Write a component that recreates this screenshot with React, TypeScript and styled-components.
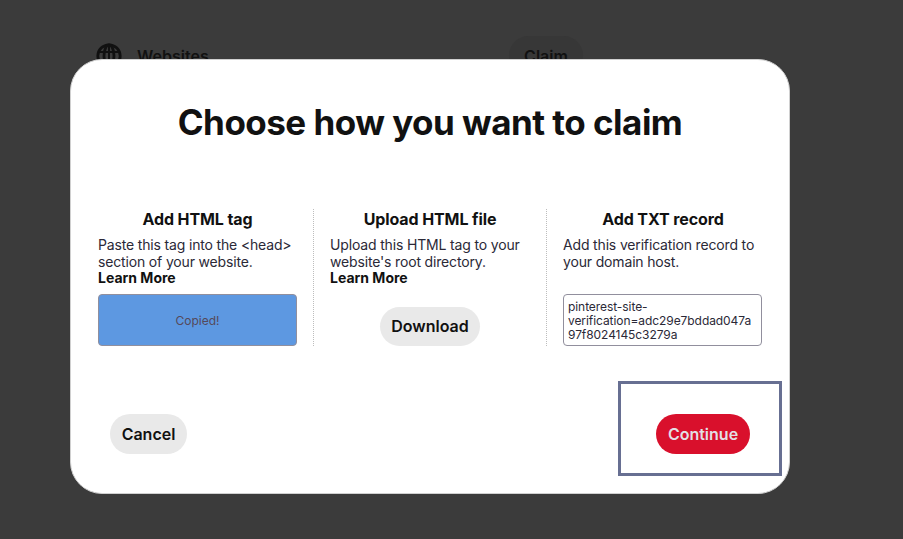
import React from 'react';
import styled, { createGlobalStyle } from 'styled-components';

const GlobalStyle = createGlobalStyle`
  *, *::before, *::after { box-sizing: border-box; }
  body {
    margin: 0;
    background: #3b3b3b;
    color: #111;
    font-family: Inter, "Liberation Sans", sans-serif;
    overflow: hidden;
  }
  h1, h2, p { margin: 0; }
  button { font-family: inherit; border: 0; }
`;

const Page = styled.main`
  position: relative;
  height: 539px;
  padding: 36px 0 0 96px;
  overflow: hidden;
`;

const SettingsRow = styled.div`
  display: flex;
  align-items: center;
  width: 487px;
  height: 39px;
  font-size: 16px;
  font-weight: 600;
`;

const SettingsLabel = styled.span`
  margin-left: 15px;
  flex: 1;
`;

const ClaimButton = styled.button`
  width: 74px;
  height: 39px;
  padding: 0;
  border-radius: 20px;
  background: #373737;
  color: #111;
  font-size: 16px;
  font-weight: 600;
`;

const Dialog = styled.section`
  position: absolute;
  top: 59px;
  left: 70px;
  display: flex;
  flex-direction: column;
  width: 720px;
  height: 435px;
  padding: 39px 7px 0 11px;
  border: 1px solid #d0d0d0;
  border-radius: 32px;
  background: #fff;
`;

const Title = styled.h1`
  height: 44px;
  padding-right: 4px;
  text-align: center;
  font-size: 35px;
  line-height: 46px;
  font-weight: 700;
  letter-spacing: -0.52px;
  white-space: nowrap;
`;

const Methods = styled.div`
  display: grid;
  grid-template-columns: 231px 233px 233px;
  height: 135px;
  margin-top: 66px;
`;

const Method = styled.article`
  display: flex;
  flex-direction: column;
  padding: 0 16px;
  & + & { border-left: 1px dotted #bdbdbd; }
`;

const MethodTitle = styled.h2`
  height: 20px;
  text-align: center;
  font-size: 16px;
  line-height: 20px;
  font-weight: 700;
  letter-spacing: -0.1px;
`;

const Description = styled.p`
  height: 50px;
  margin-top: 8px;
  color: #2b2937;
  font-size: 14px;
  line-height: 16.5px;
  letter-spacing: -0.16px;
  white-space: nowrap;
`;

const LearnMore = styled.strong`
  color: #111;
  font-weight: 700;
  letter-spacing: 0;
`;

const CodeBox = styled.div<{ $copied?: boolean }>`
  display: flex;
  align-items: center;
  justify-content: ${p => (p.$copied ? 'center' : 'flex-start')};
  width: 199px;
  height: 52px;
  margin-top: 7px;
  padding: 2px 4px 0;
  border: 1px solid #918f9d;
  border-radius: 4px;
  background: ${p => (p.$copied ? '#5d98e1' : '#fff')};
  color: ${p => (p.$copied ? '#55495a' : '#2b2937')};
  font-size: 12px;
  line-height: 14px;
  letter-spacing: ${p => (p.$copied ? '0' : '-0.07px')};
  white-space: nowrap;
`;

const Pill = styled.button<{ $width: number; $height?: number; $primary?: boolean }>`
  flex: none;
  width: ${p => p.$width}px;
  height: ${p => p.$height ?? 40}px;
  padding: 0;
  border-radius: 20px;
  background: ${p => (p.$primary ? '#d9102c' : '#e9e9e9')};
  color: ${p => (p.$primary ? '#e3dfe4' : '#111')};
  font-size: 16px;
  font-weight: 600;
`;

const DownloadArea = styled.div`
  display: flex;
  justify-content: center;
  margin-top: 20px;
  ${Pill} { padding-bottom: 2px; }
`;

const Actions = styled.footer`
  display: flex;
  align-items: flex-end;
  justify-content: space-between;
  height: 95px;
  margin-top: 37px;
  padding-left: 28px;
  & > ${Pill} { margin-bottom: 22px; }
`;

const Highlight = styled.div`
  display: flex;
  align-items: flex-end;
  width: 164px;
  height: 95px;
  padding: 0 0 19px 35px;
  border: 3px solid #676f92;
`;

const GlobeIcon = () => (
  <svg width="26" height="26" viewBox="0 0 26 26" fill="none" stroke="#111" strokeWidth="2.8">
    <circle cx="13" cy="13" r="11.2" />
    <ellipse cx="13" cy="13" rx="5" ry="11.2" />
    <path d="M2.5 9h21M2.5 17h21M13 1.5v23" strokeWidth="2" />
  </svg>
);

export default function App() {
  return (
    <>
      <GlobalStyle />
      <Page>
        <SettingsRow>
          <GlobeIcon />
          <SettingsLabel>Websites</SettingsLabel>
          <ClaimButton>Claim</ClaimButton>
        </SettingsRow>
        <Dialog role="dialog" aria-labelledby="claim-title">
          <Title id="claim-title">Choose how you want to claim</Title>
          <Methods>
            <Method>
              <MethodTitle>Add HTML tag</MethodTitle>
              <Description>
                Paste this tag into the &lt;head&gt;<br />
                section of your website.<br />
                <LearnMore>Learn More</LearnMore>
              </Description>
              <CodeBox $copied>Copied!</CodeBox>
            </Method>
            <Method>
              <MethodTitle>Upload HTML file</MethodTitle>
              <Description>
                Upload this HTML tag to your<br />
                website's root directory.<br />
                <LearnMore>Learn More</LearnMore>
              </Description>
              <DownloadArea><Pill $width={100} $height={39}>Download</Pill></DownloadArea>
            </Method>
            <Method>
              <MethodTitle>Add TXT record</MethodTitle>
              <Description>
                Add this verification record to<br />
                your domain host.
              </Description>
              <CodeBox>
                pinterest-site-<br />
                verification=adc29e7bddad047a<br />
                97f8024145c3279a
              </CodeBox>
            </Method>
          </Methods>
          <Actions>
            <Pill $width={77}>Cancel</Pill>
            <Highlight><Pill $width={94} $primary>Continue</Pill></Highlight>
          </Actions>
        </Dialog>
      </Page>
    </>
  );
}
